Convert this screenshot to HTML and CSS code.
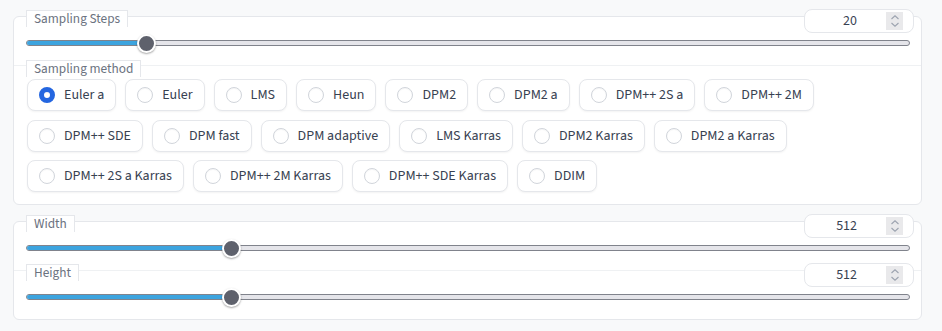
FILE: index.html
```html
<!DOCTYPE html>
<html>
<head>
<meta charset="utf-8">
<link rel="stylesheet" href="styles.css">
</head>
<body>
<div class="page">
  <section class="panel panel-first">
    <div class="block">
      <div class="head">
        <span class="label">Sampling Steps</span>
        <div class="num"><span class="num-val">20</span><span class="spin"><svg width="10" height="14" viewBox="0 0 10 14"><path d="M1.5 5 L5 1.8 L8.5 5 M1.5 9 L5 12.2 L8.5 9" fill="none" stroke="#9ca3af" stroke-width="1.1"/></svg></span></div>
      </div>
      <div class="slider">
        <div class="track"><div class="fill" style="width:120px"></div></div>
        <div class="thumb" style="left:111px"></div>
      </div>
    </div>
    <div class="block block-radio">
      <div class="head">
        <span class="label">Sampling method</span>
      </div>
      <div class="radios">
        <label class="opt checked"><span class="dot"></span>Euler a</label>
        <label class="opt"><span class="dot"></span>Euler</label>
        <label class="opt"><span class="dot"></span>LMS</label>
        <label class="opt"><span class="dot"></span>Heun</label>
        <label class="opt"><span class="dot"></span>DPM2</label>
        <label class="opt"><span class="dot"></span>DPM2 a</label>
        <label class="opt"><span class="dot"></span>DPM++ 2S a</label>
        <label class="opt"><span class="dot"></span>DPM++ 2M</label>
        <label class="opt"><span class="dot"></span>DPM++ SDE</label>
        <label class="opt"><span class="dot"></span>DPM fast</label>
        <label class="opt"><span class="dot"></span>DPM adaptive</label>
        <label class="opt"><span class="dot"></span>LMS Karras</label>
        <label class="opt"><span class="dot"></span>DPM2 Karras</label>
        <label class="opt"><span class="dot"></span>DPM2 a Karras</label>
        <label class="opt"><span class="dot"></span>DPM++ 2S a Karras</label>
        <label class="opt"><span class="dot"></span>DPM++ 2M Karras</label>
        <label class="opt"><span class="dot"></span>DPM++ SDE Karras</label>
        <label class="opt"><span class="dot"></span>DDIM</label>
      </div>
    </div>
  </section>
  <section class="panel panel-second">
    <div class="block">
      <div class="head">
        <span class="label">Width</span>
        <div class="num"><span class="num-val">512</span><span class="spin"><svg width="10" height="14" viewBox="0 0 10 14"><path d="M1.5 5 L5 1.8 L8.5 5 M1.5 9 L5 12.2 L8.5 9" fill="none" stroke="#9ca3af" stroke-width="1.1"/></svg></span></div>
      </div>
      <div class="slider">
        <div class="track"><div class="fill" style="width:205px"></div></div>
        <div class="thumb" style="left:196px"></div>
      </div>
    </div>
    <div class="block">
      <div class="head">
        <span class="label">Height</span>
        <div class="num"><span class="num-val">512</span><span class="spin"><svg width="10" height="14" viewBox="0 0 10 14"><path d="M1.5 5 L5 1.8 L8.5 5 M1.5 9 L5 12.2 L8.5 9" fill="none" stroke="#9ca3af" stroke-width="1.1"/></svg></span></div>
      </div>
      <div class="slider">
        <div class="track"><div class="fill" style="width:205px"></div></div>
        <div class="thumb" style="left:196px"></div>
      </div>
    </div>
  </section>
</div>
</body>
</html>
```
FILE: styles.css
```css
* { box-sizing: border-box; }
html, body { margin: 0; padding: 0; }
body {
  background: #f8f9fa;
  font-family: "Source Sans 3", Lato, "Liberation Sans", sans-serif;
  color: #374151;
  width: 942px;
  height: 331px;
  overflow: hidden;
}
.page {
  padding: 16px 20px 0 13px;
}
.panel {
  background: #fff;
  border: 1px solid #e5e7eb;
  border-radius: 6px;
}
.panel-first { padding-bottom: 12px; }
.panel-second { margin-top: 16px; }
.block {
  display: flow-root;
  height: 48px;
  padding: 0 7px 0 12px;
}
.block + .block {
  border-top: 1px solid #eff1f3;
  height: 49px;
}
.head {
  display: flex;
  justify-content: space-between;
  align-items: flex-start;
  margin-top: -8px;
  height: 24px;
}
.label {
  margin-top: 1px;
  height: 17px;
  padding: 0 7px;
  font-size: 13.3px;
  line-height: 16px;
  color: #6b7280;
  background: #fff;
  border: 1px solid #e5e7eb;
  border-bottom: none;
}
.num {
  width: 110px;
  height: 24px;
  border: 1px solid #e5e7eb;
  border-radius: 8px;
  background: #fff;
  display: flex;
  align-items: center;
  justify-content: flex-end;
  padding-right: 10px;
  font-size: 14px;
  color: #374151;
}
.num-val { margin-right: 29px; }
.spin {
  width: 17px;
  height: 18px;
  background: #e9e9eb;
  display: flex;
  align-items: center;
  justify-content: center;
}
.slider {
  position: relative;
  height: 20px;
  margin-right: 4px;
}
.track {
  position: absolute;
  left: 0; right: 0;
  top: 7px;
  height: 6px;
  border-radius: 3px;
  border: 1px solid #80838c;
  background: #e5e5ea;
  overflow: hidden;
}
.fill {
  position: absolute;
  left: -1px; top: -1px; bottom: -1px;
  background: #3ca4df;
}
.thumb {
  position: absolute;
  top: 1px;
  width: 19px;
  height: 19px;
  border-radius: 50%;
  background: #5e616c;
  border: 2px solid #fff;
  box-shadow: 0 1px 2px rgba(0,0,0,0.35);
}
.block.block-radio {
  height: auto;
}
.block-radio .head {
  margin-top: -6px;
  height: 17px;
}
.block-radio .label { margin-top: 0; }
.radios {
  display: flex;
  flex-wrap: wrap;
  gap: 8.5px 9px;
  margin-top: 2px;
  padding-left: 1px;
}
.opt {
  display: flex;
  align-items: center;
  height: 32px;
  padding: 0 11px 0 11px;
  border: 1px solid #e5e7eb;
  border-radius: 8px;
  background: #fff;
  box-shadow: 0 1px 2px rgba(0,0,0,0.05);
  font-size: 14px;
  color: #374151;
}
.dot {
  width: 16px;
  height: 16px;
  border-radius: 50%;
  border: 1px solid #d1d5db;
  background: #fff;
  margin-right: 9px;
  box-shadow: inset 0 1px 1px rgba(0,0,0,0.04);
  flex: none;
}
.opt.checked .dot {
  border: 5px solid #2466e0;
  background: #fff;
}
```
